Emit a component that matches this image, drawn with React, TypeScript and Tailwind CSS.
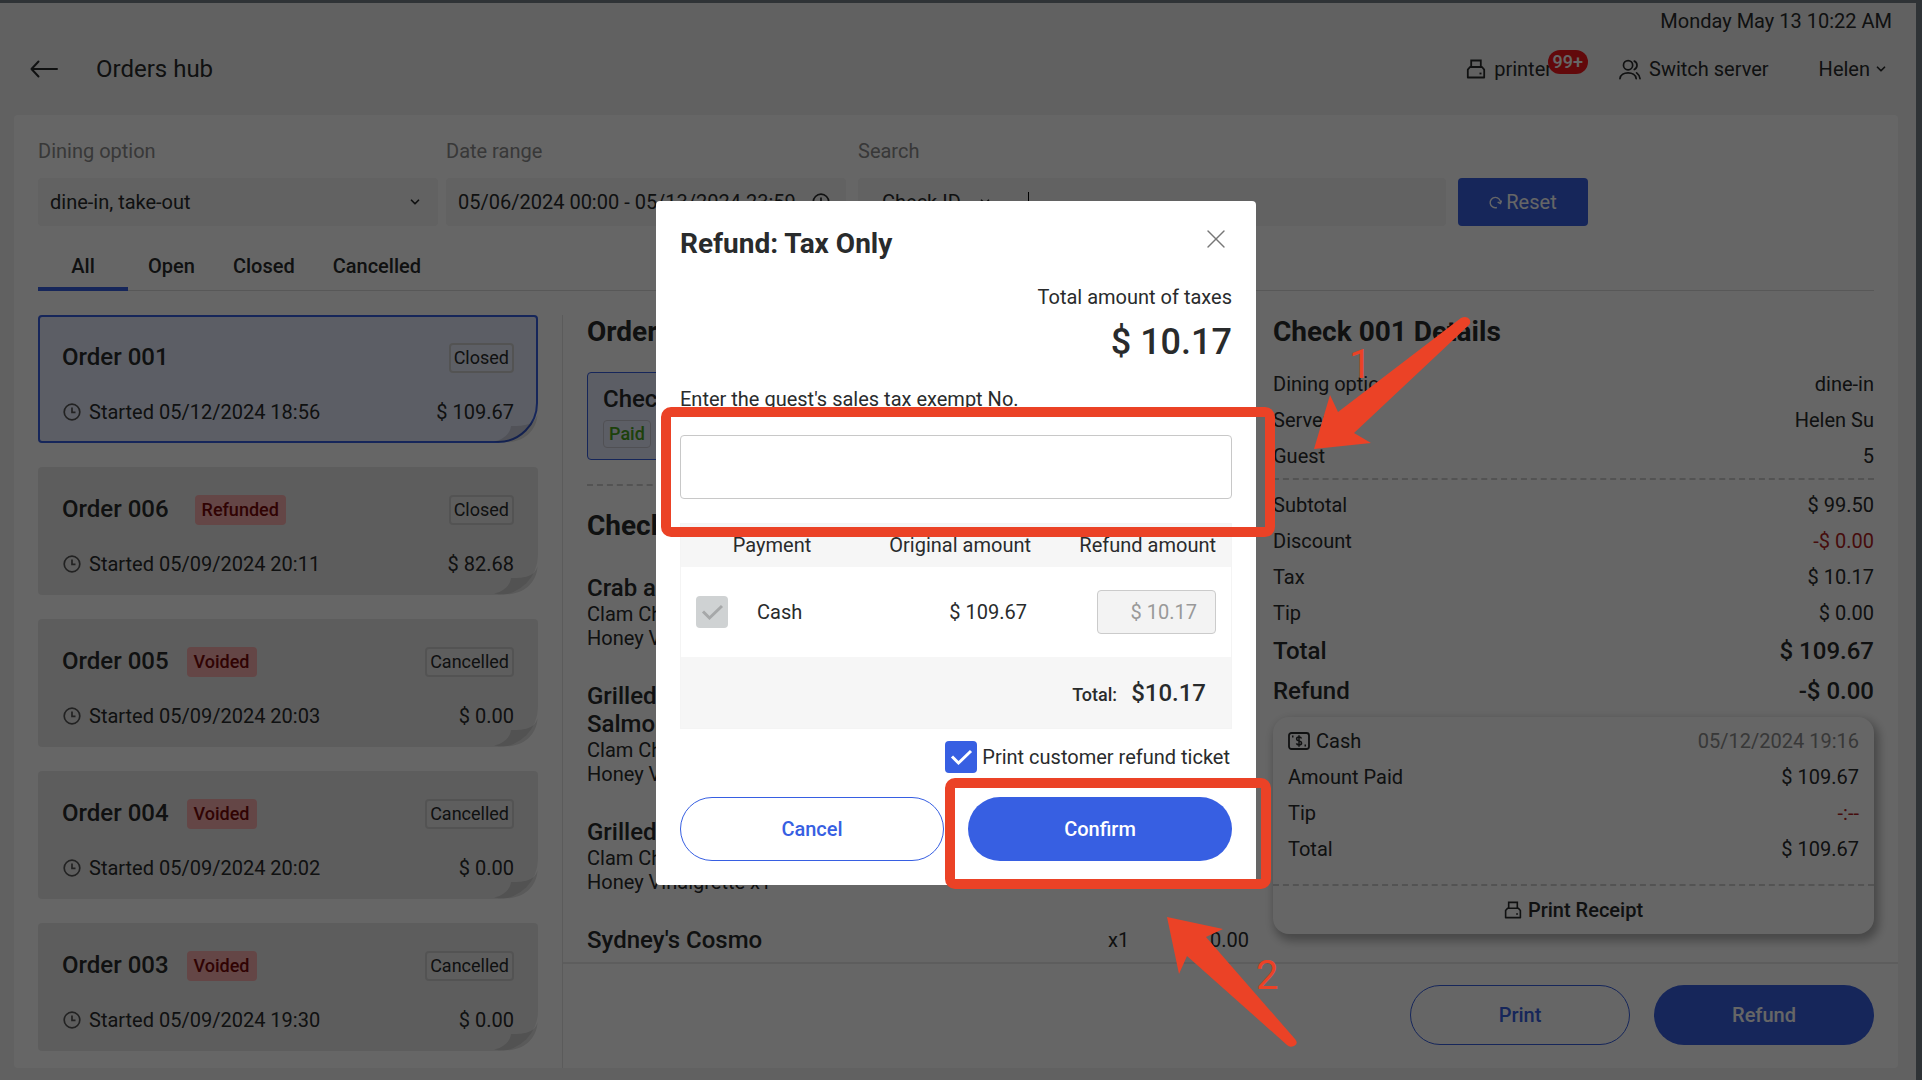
import type { ReactNode } from 'react';
import { ChevronDown, X } from 'lucide-react';

type Order = {
  id: string;
  started: string;
  amount: string;
  status: string;
  tag?: string;
  active?: boolean;
};

type Item = { name: string[]; mods: string[]; qty?: string; price?: string };

const orders: Order[] = [
  { id: '001', started: '05/12/2024 18:56', amount: '$ 109.67', status: 'Closed', active: true },
  { id: '006', started: '05/09/2024 20:11', amount: '$ 82.68', status: 'Closed', tag: 'Refunded' },
  { id: '005', started: '05/09/2024 20:03', amount: '$ 0.00', status: 'Cancelled', tag: 'Voided' },
  { id: '004', started: '05/09/2024 20:02', amount: '$ 0.00', status: 'Cancelled', tag: 'Voided' },
  { id: '003', started: '05/09/2024 19:30', amount: '$ 0.00', status: 'Cancelled', tag: 'Voided' },
];

const items: Item[] = [
  { name: ['Crab and'], mods: ['Clam Chowder', 'Honey Vinaigrette x1'] },
  { name: ['Grilled', 'Salmon'], mods: ['Clam Chowder', 'Honey Vinaigrette x1'] },
  { name: ['Grilled'], mods: ['Clam Chowder', 'Honey Vinaigrette x1'] },
  { name: ["Sydney's Cosmo"], mods: [], qty: 'x1', price: '$ 0.00' },
];

function BackIcon() {
  return (
    <svg viewBox="0 0 28 18" className="h-[18px] w-7" fill="none" stroke="currentColor" strokeWidth="2" strokeLinecap="round" strokeLinejoin="round" aria-hidden="true">
      <path d="M27 9H1.500M8.500 1.500 1.500 9l7 7.500" />
    </svg>
  );
}

function PrinterIcon({ className }: { className?: string }) {
  return (
    <svg viewBox="0 0 20 20" className={className} fill="none" stroke="currentColor" strokeWidth="1.8" aria-hidden="true">
      <path d="M5.200 8V1.500h9.600V8" />
      <path d="M4 8h12l2.200 2.600V18.500H1.800v-7.900Z" strokeLinejoin="round" />
      <path d="M13.500 14.500h2" />
    </svg>
  );
}

function UsersIcon() {
  return (
    <svg viewBox="0 0 24 22" className="h-[21px] w-[23px]" fill="none" stroke="currentColor" strokeWidth="1.8" strokeLinecap="round" aria-hidden="true">
      <circle cx="10.500" cy="6.500" r="4.800" />
      <path d="M17 2.200c3.800 1.500 3.800 7.300 0 8.800" />
      <path d="M2 20.500c1-8 16-8 17 0" />
      <path d="M19.500 14.500c1.800 1.300 3 3.300 3.500 6" />
    </svg>
  );
}

function ClockIcon({ className }: { className?: string }) {
  return (
    <svg viewBox="0 0 18 18" className={className} fill="none" stroke="currentColor" strokeWidth="1.7" aria-hidden="true">
      <circle cx="9" cy="9" r="7.800" />
      <path d="M9 4.500V9.300h3.500" />
    </svg>
  );
}

function CashIcon() {
  return (
    <svg viewBox="0 0 22 18" className="h-[18px] w-[22px]" fill="none" stroke="currentColor" strokeWidth="1.800" aria-hidden="true">
      <rect x="1" y="1" width="20" height="16" rx="2.500" />
      <path d="M13.500 6.500c-.4-1-1.300-1.400-2.500-1.400-1.400 0-2.400.7-2.400 1.900 0 2.700 5 1.300 5 4 0 1.200-1 1.900-2.600 1.900-1.300 0-2.200-.5-2.600-1.500M11 3.300v11.400" strokeWidth="1.500" />
      <path d="M4 4.500h1.500M16.500 13.500H18" />
    </svg>
  );
}

function ResetIcon() {
  return (
    <svg viewBox="0 0 14 14" className="h-[13px] w-[13px]" fill="none" stroke="currentColor" strokeWidth="1.500" aria-hidden="true">
      <path d="M8.500 12.400A5.600 5.600 0 1 1 12.400 7.800" />
      <path d="M9.300 6.500l3 1.500 1.300-3" />
    </svg>
  );
}

function PageFold() {
  return (
    <svg viewBox="0 0 44 30" className="absolute right-0 bottom-0 h-[30px] w-[44px]" aria-hidden="true">
      <path d="M43.500 1C41 13 27 13 17 13c-1 8-8 14-17 15.500 5 1 12 1 17 .5 15-2 26-13 26.500-28Z" fill="#000" fillOpacity=".12" />
    </svg>
  );
}

function Tick({ className }: { className: string }) {
  return (
    <svg viewBox="0 0 32 32" className={`pointer-events-none col-start-1 row-start-1 size-8 ${className}`} fill="none" stroke="currentColor" strokeWidth="3" aria-hidden="true">
      <path d="M7 15.500l6.500 6.500L26 10" />
    </svg>
  );
}

function Row({ label, value, valueClass = '' }: { label: ReactNode; value: string; valueClass?: string }) {
  return (
    <div className="flex h-9 items-center justify-between">
      <dt className="flex items-center gap-1.5">{label}</dt>
      <dd className={valueClass}>{value}</dd>
    </div>
  );
}

function OrderCard({ order }: { order: Order }) {
  return (
    <li
      className={`relative flex h-32 flex-col justify-between rounded rounded-br-[40px] px-6 pt-7 pb-[17px] ${
        order.active ? 'bg-[#e6ebfc] outline-2 -outline-offset-2 outline-[#375fe2]' : 'bg-[#e9e9e9]'
      }`}
    >
      <PageFold />
      <div className="flex items-start">
        <h3 className="text-2xl leading-7 font-medium">Order {order.id}</h3>
        {order.tag && (
          <span
            className={`flex h-[30px] items-center rounded bg-[#fbaeae] px-[7px] text-lg font-medium text-[#780808] ${
              order.tag === 'Refunded' ? 'ml-[26px]' : 'ml-[18px]'
            }`}
          >
            {order.tag}
          </span>
        )}
        <span className="ml-auto flex h-[30px] items-center rounded border-2 border-[#d0d0d0] bg-white/15 px-[3px] text-lg">
          {order.status}
        </span>
      </div>
      <div className="flex items-center">
        <ClockIcon className="mr-2 ml-px size-[18px] text-[#555]" />
        <span>Started {order.started}</span>
        <span className="ml-auto">{order.amount}</span>
      </div>
    </li>
  );
}

function Header() {
  return (
    <header className="flex h-28 flex-col pr-6 pl-[30px]">
      <time className="self-end pt-1 leading-7">Monday May 13 10:22 AM</time>
      <div className="flex h-[68px] items-center">
        <button type="button" aria-label="Back">
          <BackIcon />
        </button>
        <h1 className="ml-[38px] text-2xl">Orders hub</h1>
        <button type="button" className="relative ml-auto flex items-center gap-2">
          <PrinterIcon className="size-5" />
          printer
          <span className="absolute -top-[5px] -right-9 flex h-6 items-center rounded-full bg-[#f5181c] px-[5px] text-lg font-medium text-white">
            99+
          </span>
        </button>
        <button type="button" className="ml-[66px] flex items-center gap-2">
          <UsersIcon />
          Switch server
        </button>
        <button type="button" className="mr-1 ml-[50px] flex items-center gap-1">
          Helen
          <ChevronDown className="size-3.5" strokeWidth={3} />
        </button>
      </div>
    </header>
  );
}

function Filters() {
  return (
    <form className="flex items-end px-6 pt-5">
      <div className="mr-2 w-[400px]">
        <label htmlFor="dining" className="flex h-8 items-center text-[#8c8c8c]">Dining option</label>
        <div className="mt-[11px] grid items-center">
          <select id="dining" className="col-start-1 row-start-1 h-12 appearance-none rounded bg-[#f4f4f4] px-3">
            <option>dine-in, take-out</option>
          </select>
          <ChevronDown className="pointer-events-none col-start-1 row-start-1 mr-4 size-3.5 justify-self-end" strokeWidth={3} />
        </div>
      </div>
      <div className="mr-3 w-[400px]">
        <label htmlFor="range" className="flex h-8 items-center text-[#8c8c8c]">Date range</label>
        <div className="mt-[11px] grid items-center">
          <input id="range" defaultValue="05/06/2024 00:00 - 05/13/2024 23:59" className="col-start-1 row-start-1 h-12 rounded bg-[#f4f4f4] px-3" />
          <ClockIcon className="pointer-events-none col-start-1 row-start-1 mr-4 size-[18px] justify-self-end" />
        </div>
      </div>
      <div className="mr-3 w-[588px]">
        <label htmlFor="search" className="flex h-8 items-center text-[#8c8c8c]">Search</label>
        <div className="mt-[11px] flex h-12 items-center rounded bg-[#f4f4f4] px-6">
          <select aria-label="Search by" className="w-24 appearance-none">
            <option>Check ID</option>
          </select>
          <ChevronDown className="size-3.5" strokeWidth={3} />
          <span className="ml-9 h-5 w-px bg-black" />
          <input id="search" className="min-w-0 flex-1 outline-none" />
        </div>
      </div>
      <button type="button" className="flex h-12 w-[130px] items-center justify-center gap-1 rounded bg-[#375fe2] text-white">
        <ResetIcon />
        Reset
      </button>
    </form>
  );
}

function Tabs() {
  return (
    <nav className="mx-6 mt-3 flex h-[53px] items-center gap-[38px] border-b border-[#dcdcdc] pt-1 font-medium">
      <button type="button" className="-mr-[18px] h-[49px] w-[90px] border-b-4 border-[#375fe2] pt-1">All</button>
      <button type="button">Open</button>
      <button type="button">Closed</button>
      <button type="button">Cancelled</button>
    </nav>
  );
}

function OrderItems() {
  return (
    <section className="min-w-0 flex-1">
      <h2 className="text-[28px] leading-[34px] font-bold">Order 001</h2>
      <div className="mt-[23px] flex h-[88px] w-60 flex-col items-start rounded border border-[#375fe2] bg-[#e6ebfc] px-[15px] pt-3">
        <h3 className="text-2xl leading-7 font-medium">Check 001</h3>
        <span className="mt-[7px] flex h-7 items-center rounded border border-[#c9c9d2] px-[5px] text-lg font-medium text-[#4aa31c]">Paid</span>
      </div>
      <div className="mt-6 border-t-2 border-dashed border-[#cfcfcf]" />
      <h2 className="mt-[23px] text-[28px] leading-[34px] font-bold">Check 001</h2>
      <ul className="mt-[31px] flex flex-col gap-8">
        {items.map((item, i) => (
          <li key={i} className="grid grid-cols-[1fr_120px_64px]">
            <div>
              <h3 className="text-2xl leading-7 font-medium">
                {item.name.map((line) => (
                  <span key={line} className="block">{line}</span>
                ))}
              </h3>
              {item.mods.map((mod) => (
                <p key={mod} className="leading-6">{mod}</p>
              ))}
            </div>
            {item.qty && <span className="pl-[43px] leading-7">{item.qty}</span>}
            {item.price && <span className="text-right leading-7">{item.price}</span>}
          </li>
        ))}
      </ul>
    </section>
  );
}

function CheckDetails() {
  return (
    <section className="w-[601px] shrink-0">
      <h2 className="text-[28px] leading-[34px] font-bold">Check 001 Details</h2>
      <dl className="mt-[17px]">
        <Row label="Dining option" value="dine-in" />
        <Row label="Server" value="Helen Su" />
        <Row label="Guest" value="5" />
      </dl>
      <dl className="mt-1 border-t-2 border-dashed border-[#cfcfcf] pt-[7px]">
        <Row label="Subtotal" value="$ 99.50" />
        <Row label="Discount" value="-$ 0.00" valueClass="text-[#b01e22]" />
        <Row label="Tax" value="$ 10.17" />
        <Row label="Tip" value="$ 0.00" />
        <div className="flex h-10 items-center justify-between text-2xl font-medium">
          <dt>Total</dt>
          <dd>$ 109.67</dd>
        </div>
        <div className="flex h-10 items-center justify-between text-2xl font-medium">
          <dt>Refund</dt>
          <dd>-$ 0.00</dd>
        </div>
      </dl>
      <div className="mt-[6px] rounded-2xl shadow-[3px_5px_10px_2px_rgba(0,0,0,0.3)]">
        <dl className="px-[15px] pt-[6px] pb-[17px]">
          <Row label={<><CashIcon />Cash</>} value="05/12/2024 19:16" valueClass="text-[#8c8c8c]" />
          <Row label="Amount Paid" value="$ 109.67" />
          <Row label="Tip" value="-:--" valueClass="text-[#b01e22]" />
          <Row label="Total" value="$ 109.67" />
        </dl>
        <button type="button" className="flex h-[50px] w-full items-center justify-center gap-1.5 border-t-2 border-dashed border-[#cfcfcf] font-medium">
          <PrinterIcon className="size-[18px]" />
          Print Receipt
        </button>
      </div>
    </section>
  );
}

// Red boxes and arrows of the walkthrough, placed over the dialog
function Callouts() {
  return (
    <div className="pointer-events-none absolute inset-0 text-[#eb4226]">
      <div className="absolute top-[206px] left-[5px] h-[130px] w-[614px] rounded-[10px] border-10 border-current" />
      <div className="absolute top-[577px] left-[289px] h-[111px] w-[326px] rounded-[10px] border-10 border-current" />
      <svg viewBox="0 0 170 140" className="absolute top-[114px] left-[654px] h-[140px] w-[170px]" fill="currentColor" aria-hidden="true">
        <path d="M4 134 20 80 28 97 151 3Q157 0 160 5 161 8 159 10L44 118 61 128Z" />
      </svg>
      <svg viewBox="0 0 140 140" className="absolute top-[711px] left-[506px] h-[140px] w-[140px]" fill="currentColor" aria-hidden="true">
        <path d="M5 5 61 17 44 25 133 127Q137 132 132 134 128 136 125 133L25 44 17 62Z" />
      </svg>
      <span className="absolute top-[139px] left-[693px] text-[40px] leading-[50px]">1</span>
      <span className="absolute top-[750px] left-[600px] text-[40px] leading-[50px]">2</span>
    </div>
  );
}

function RefundDialog() {
  return (
    <div role="dialog" aria-labelledby="refund-title" className="relative flex w-[600px] flex-col rounded bg-white px-6 pb-6">
      <div className="flex h-[84px] items-center justify-between">
        <h2 id="refund-title" className="pt-0.5 text-[28px] font-bold">Refund: Tax Only</h2>
        <button type="button" aria-label="Close" className="-mt-2">
          <X className="size-8 text-[#777]" strokeWidth={1} />
        </button>
      </div>
      <p className="text-right leading-6">Total amount of taxes</p>
      <p className="text-right text-4xl leading-[66px] font-medium">$ 10.17</p>
      <label htmlFor="exempt" className="mt-[10px] leading-7">Enter the guest's sales tax exempt No.</label>
      <input id="exempt" className="mt-[22px] h-16 rounded border border-[#c8c8c8] px-4" />
      <table className="mt-6 w-full table-fixed bg-white outline-1 -outline-offset-1 outline-[#f4f4f4]">
        <thead className="bg-[#f6f6f6]">
          <tr className="h-11">
            <th className="w-[184px] text-center font-normal">Payment</th>
            <th className="w-[167px] text-right font-normal">Original amount</th>
            <th className="pr-4 text-right font-normal">Refund amount</th>
          </tr>
        </thead>
        <tbody>
          <tr className="h-[90px]">
            <td className="pl-4">
              <label className="flex items-center gap-[29px]">
                <span className="grid">
                  <input type="checkbox" checked readOnly disabled className="col-start-1 row-start-1 size-8 appearance-none rounded-sm bg-[#cfd2d3]" />
                  <Tick className="text-[#a6a8a9]" />
                </span>
                Cash
              </label>
            </td>
            <td className="pr-1 text-right">$ 109.67</td>
            <td className="pr-4">
              <input aria-label="Refund amount" defaultValue="$ 10.17" disabled className="ml-auto block h-11 w-[119px] rounded border border-[#cbcbcb] bg-[#f3f3f3] px-[18px] text-right text-[#999]" />
            </td>
          </tr>
        </tbody>
        <tfoot className="bg-[#f6f6f6]">
          <tr className="h-[72px]">
            <td colSpan={3} className="pr-[26px] text-right text-2xl font-medium">
              <span className="mr-[14px] text-lg">Total:</span>$10.17
            </td>
          </tr>
        </tfoot>
      </table>
      <label className="mt-3 flex h-8 items-center gap-[5px] self-end pr-0.5">
        <span className="grid">
          <input type="checkbox" defaultChecked className="col-start-1 row-start-1 size-8 appearance-none rounded-sm bg-[#375fe2]" />
          <Tick className="text-white" />
        </span>
        Print customer refund ticket
      </label>
      <div className="mt-6 grid grid-cols-2 gap-6 font-medium">
        <button type="button" className="h-16 rounded-full border border-[#375fe2] text-[#375fe2]">Cancel</button>
        <button type="button" className="h-16 rounded-full bg-[#375fe2] text-white">Confirm</button>
      </div>
      <Callouts />
    </div>
  );
}

export default function App() {
  return (
    <div className="min-h-screen bg-[#2f3336] pt-[3px] pr-[6px] font-[Roboto,sans-serif] text-xl text-[#292b2c]">
      <div className="relative flex min-h-[calc(100vh-3px)] flex-col bg-[#f3f3f3]">
        <Header />
        <main className="mr-[18px] mb-3 ml-[14px] flex flex-1 flex-col rounded bg-white">
          <Filters />
          <Tabs />
          <div className="flex flex-1 pl-6">
            <ul className="mt-6 flex w-[500px] shrink-0 flex-col gap-6 pb-4">
              {orders.map((order) => (
                <OrderCard key={order.id} order={order} />
              ))}
            </ul>
            <div className="mt-6 ml-6 flex min-w-0 flex-1 flex-col border-l border-[#e4e4e4]">
              <div className="flex flex-1 gap-6 pr-6 pl-6">
                <OrderItems />
                <CheckDetails />
              </div>
              <footer className="flex h-[106px] items-center justify-end gap-6 border-t-2 border-[#e8e8e8] pr-6 pb-0.5 font-medium">
                <button type="button" className="h-[60px] w-[220px] rounded-full border border-[#375fe2] text-[#375fe2]">Print</button>
                <button type="button" className="h-[60px] w-[220px] rounded-full bg-[#375fe2] text-white">Refund</button>
              </footer>
            </div>
          </div>
        </main>
        <div className="absolute inset-0 flex items-center justify-center bg-black/60 pt-0.5 pr-1">
          <RefundDialog />
        </div>
      </div>
    </div>
  );
}
